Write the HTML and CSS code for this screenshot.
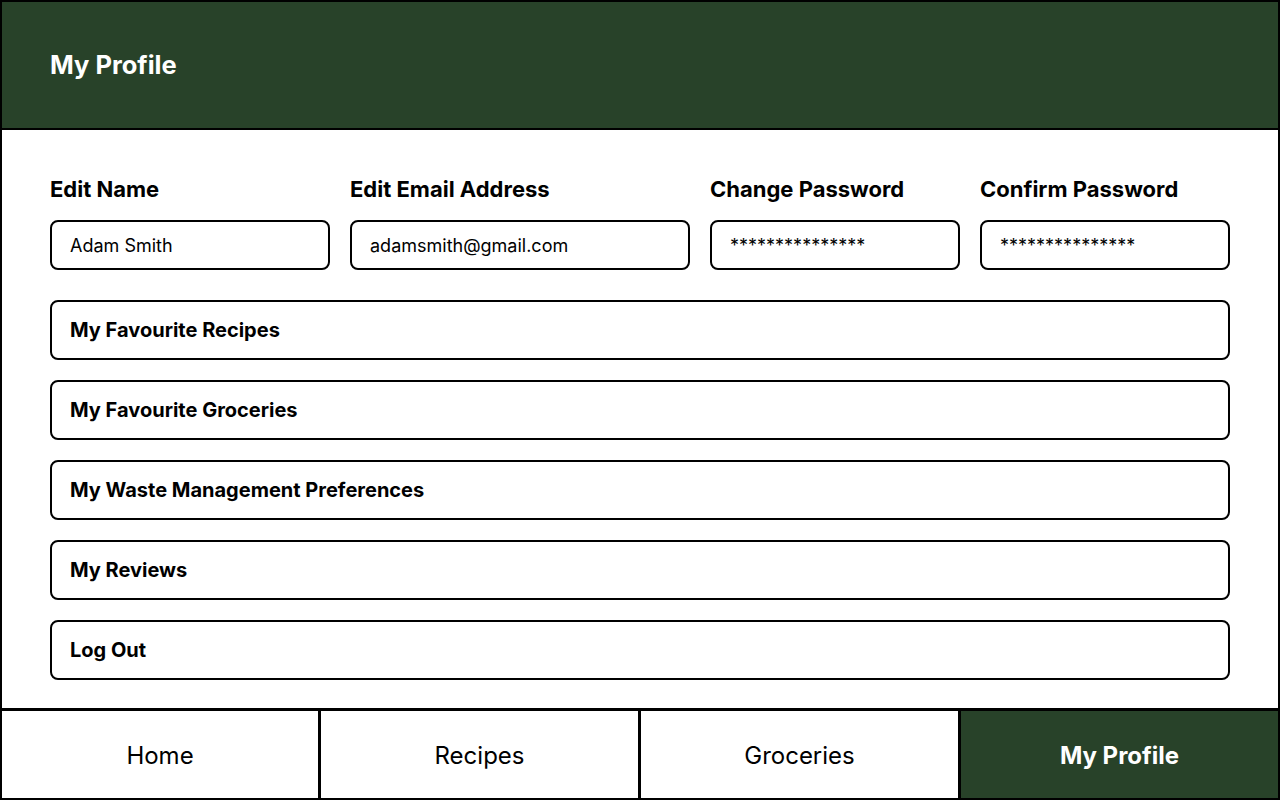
FILE: index.html
```html
<!DOCTYPE html>
<html lang="en">
<head>
    <meta charset="UTF-8">
    <meta name="viewport" content="width=device-width, initial-scale=1.0">
    <title>My Profile</title>
    <link rel="stylesheet" href="styles.css">
</head>
<body>
    <div class="page">
        <header class="topbar">
            <h1 class="page-title">My Profile</h1>
        </header>

        <main class="profile">
            <div class="fields">
                <div class="field field-name">
                    <label for="name">Edit Name</label>
                    <input id="name" type="text" value="Adam Smith">
                </div>
                <div class="field field-email">
                    <label for="email">Edit Email Address</label>
                    <input id="email" type="email" value="adamsmith@gmail.com">
                </div>
                <div class="field field-pass">
                    <label for="password">Change Password</label>
                    <input id="password" type="text" value="***************">
                </div>
                <div class="field field-pass">
                    <label for="confirm">Confirm Password</label>
                    <input id="confirm" type="text" value="***************">
                </div>
            </div>

            <div class="menu-list">
                <a href="#" class="menu-item">My Favourite Recipes</a>
                <a href="#" class="menu-item">My Favourite Groceries</a>
                <a href="#" class="menu-item">My Waste Management Preferences</a>
                <a href="#" class="menu-item">My Reviews</a>
                <a href="#" class="menu-item">Log Out</a>
            </div>
        </main>

        <nav class="tabbar">
            <a href="#" class="tab">Home</a>
            <a href="#" class="tab">Recipes</a>
            <a href="#" class="tab">Groceries</a>
            <a href="#" class="tab active">My Profile</a>
        </nav>
    </div>
</body>
</html>
```

FILE: styles.css
```css
* {
    margin: 0;
    padding: 0;
    box-sizing: border-box;
    font-family: Inter, 'Noto Sans', sans-serif;
}

body {
    background-color: white;
    color: #000;
}

.page {
    height: 800px;
    display: flex;
    flex-direction: column;
    border: 2px solid #000;
}

.topbar {
    height: 128px;
    flex-shrink: 0;
    background-color: #284229;
    border-bottom: 2px solid #000;
    display: flex;
    align-items: center;
    padding: 0 48px 2px;
}

.page-title {
    color: white;
    font-size: 25.5px;
    font-weight: 700;
}

.profile {
    flex: 1;
    padding: 47px 48px 0;
}

.fields {
    display: flex;
    gap: 20px;
    margin-bottom: 30px;
}

.field {
    display: flex;
    flex-direction: column;
}

.field-name {
    width: 280px;
}

.field-email {
    width: 340px;
}

.field-pass {
    width: 250px;
}

.field label {
    font-size: 22px;
    font-weight: 700;
    line-height: 24px;
    margin-bottom: 19px;
}

.field input {
    height: 50px;
    border: 2px solid #000;
    border-radius: 8px;
    padding: 0 18px;
    font-size: 18px;
    color: #000;
    background: white;
    outline: none;
}

.menu-list {
    display: flex;
    flex-direction: column;
    gap: 20px;
}

.menu-item {
    height: 60px;
    display: flex;
    align-items: center;
    padding: 0 18px;
    border: 2px solid #000;
    border-radius: 8px;
    font-size: 20px;
    font-weight: 700;
    color: #000;
    text-decoration: none;
}

.tabbar {
    height: 90px;
    flex-shrink: 0;
    display: grid;
    grid-template-columns: 316px repeat(3, 1fr);
    border-top: 3px solid #000;
}

.tab {
    display: flex;
    align-items: center;
    justify-content: center;
    padding-top: 2px;
    font-size: 24px;
    color: #000;
    text-decoration: none;
}

.tab + .tab {
    border-left: 3px solid #000;
}

.tab.active {
    background-color: #284229;
    color: white;
    font-weight: 700;
}
```
